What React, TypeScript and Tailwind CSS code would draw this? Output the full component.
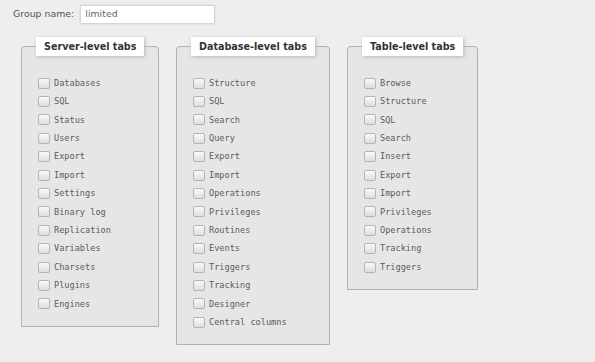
import React from "react";

const groups = [
  {
    title: "Server-level tabs",
    width: "w-[138px]",
    items: [
      "Databases",
      "SQL",
      "Status",
      "Users",
      "Export",
      "Import",
      "Settings",
      "Binary log",
      "Replication",
      "Variables",
      "Charsets",
      "Plugins",
      "Engines",
    ],
  },
  {
    title: "Database-level tabs",
    width: "w-[154px]",
    items: [
      "Structure",
      "SQL",
      "Search",
      "Query",
      "Export",
      "Import",
      "Operations",
      "Privileges",
      "Routines",
      "Events",
      "Triggers",
      "Tracking",
      "Designer",
      "Central columns",
    ],
  },
  {
    title: "Table-level tabs",
    width: "w-[131px]",
    items: [
      "Browse",
      "Structure",
      "SQL",
      "Search",
      "Insert",
      "Export",
      "Import",
      "Privileges",
      "Operations",
      "Tracking",
      "Triggers",
    ],
  },
];

function Check({ label }: { label: string }) {
  return (
    <label className="flex items-center h-[18.4px] gap-[4px]">
      <span className="w-[12px] h-[11px] rounded-[2px] border border-[#b4b4b4] bg-gradient-to-b from-[#fafafa] to-[#dedede] shrink-0" />
      <span className="text-[8.6px] text-[#5c5c5c] font-['DejaVu_Sans_Mono',monospace] leading-none">
        {label}
      </span>
    </label>
  );
}

export default function App() {
  return (
    <div className="min-h-screen bg-[#eeeeee] font-['DejaVu_Sans',sans-serif]">
      {/* Group name */}
      <div className="flex items-center pt-[5px] pl-[13px] gap-[6px]">
        <span className="text-[9.4px] text-[#555]">Group name:</span>
        <div className="w-[135px] h-[19px] bg-white border border-[#d6d6d6] shadow-[0_0_2px_#ccc] rounded-[1px] flex items-center pl-[4px] text-[9.4px] text-[#666]">
          limited
        </div>
      </div>

      {/* Fieldsets */}
      <div className="flex items-start gap-[17px] pl-[21px] mt-[13px]">
        {groups.map((g) => (
          <fieldset
            key={g.title}
            className={`${g.width} border border-[#b0b0b0] rounded-t-[4px] bg-[#e6e6e6] pb-[13px]`}
          >
            <legend className="ml-[14px] bg-white px-[8px] py-[3px] text-[9.6px] leading-[13px] font-bold text-[#333] shadow-[1px_1px_4px_#b8b8b8]">
              {g.title}
            </legend>
            <div className="pl-[16px] pt-[18px]">
              {g.items.map((it) => (
                <Check key={it} label={it} />
              ))}
            </div>
          </fieldset>
        ))}
      </div>
    </div>
  );
}
